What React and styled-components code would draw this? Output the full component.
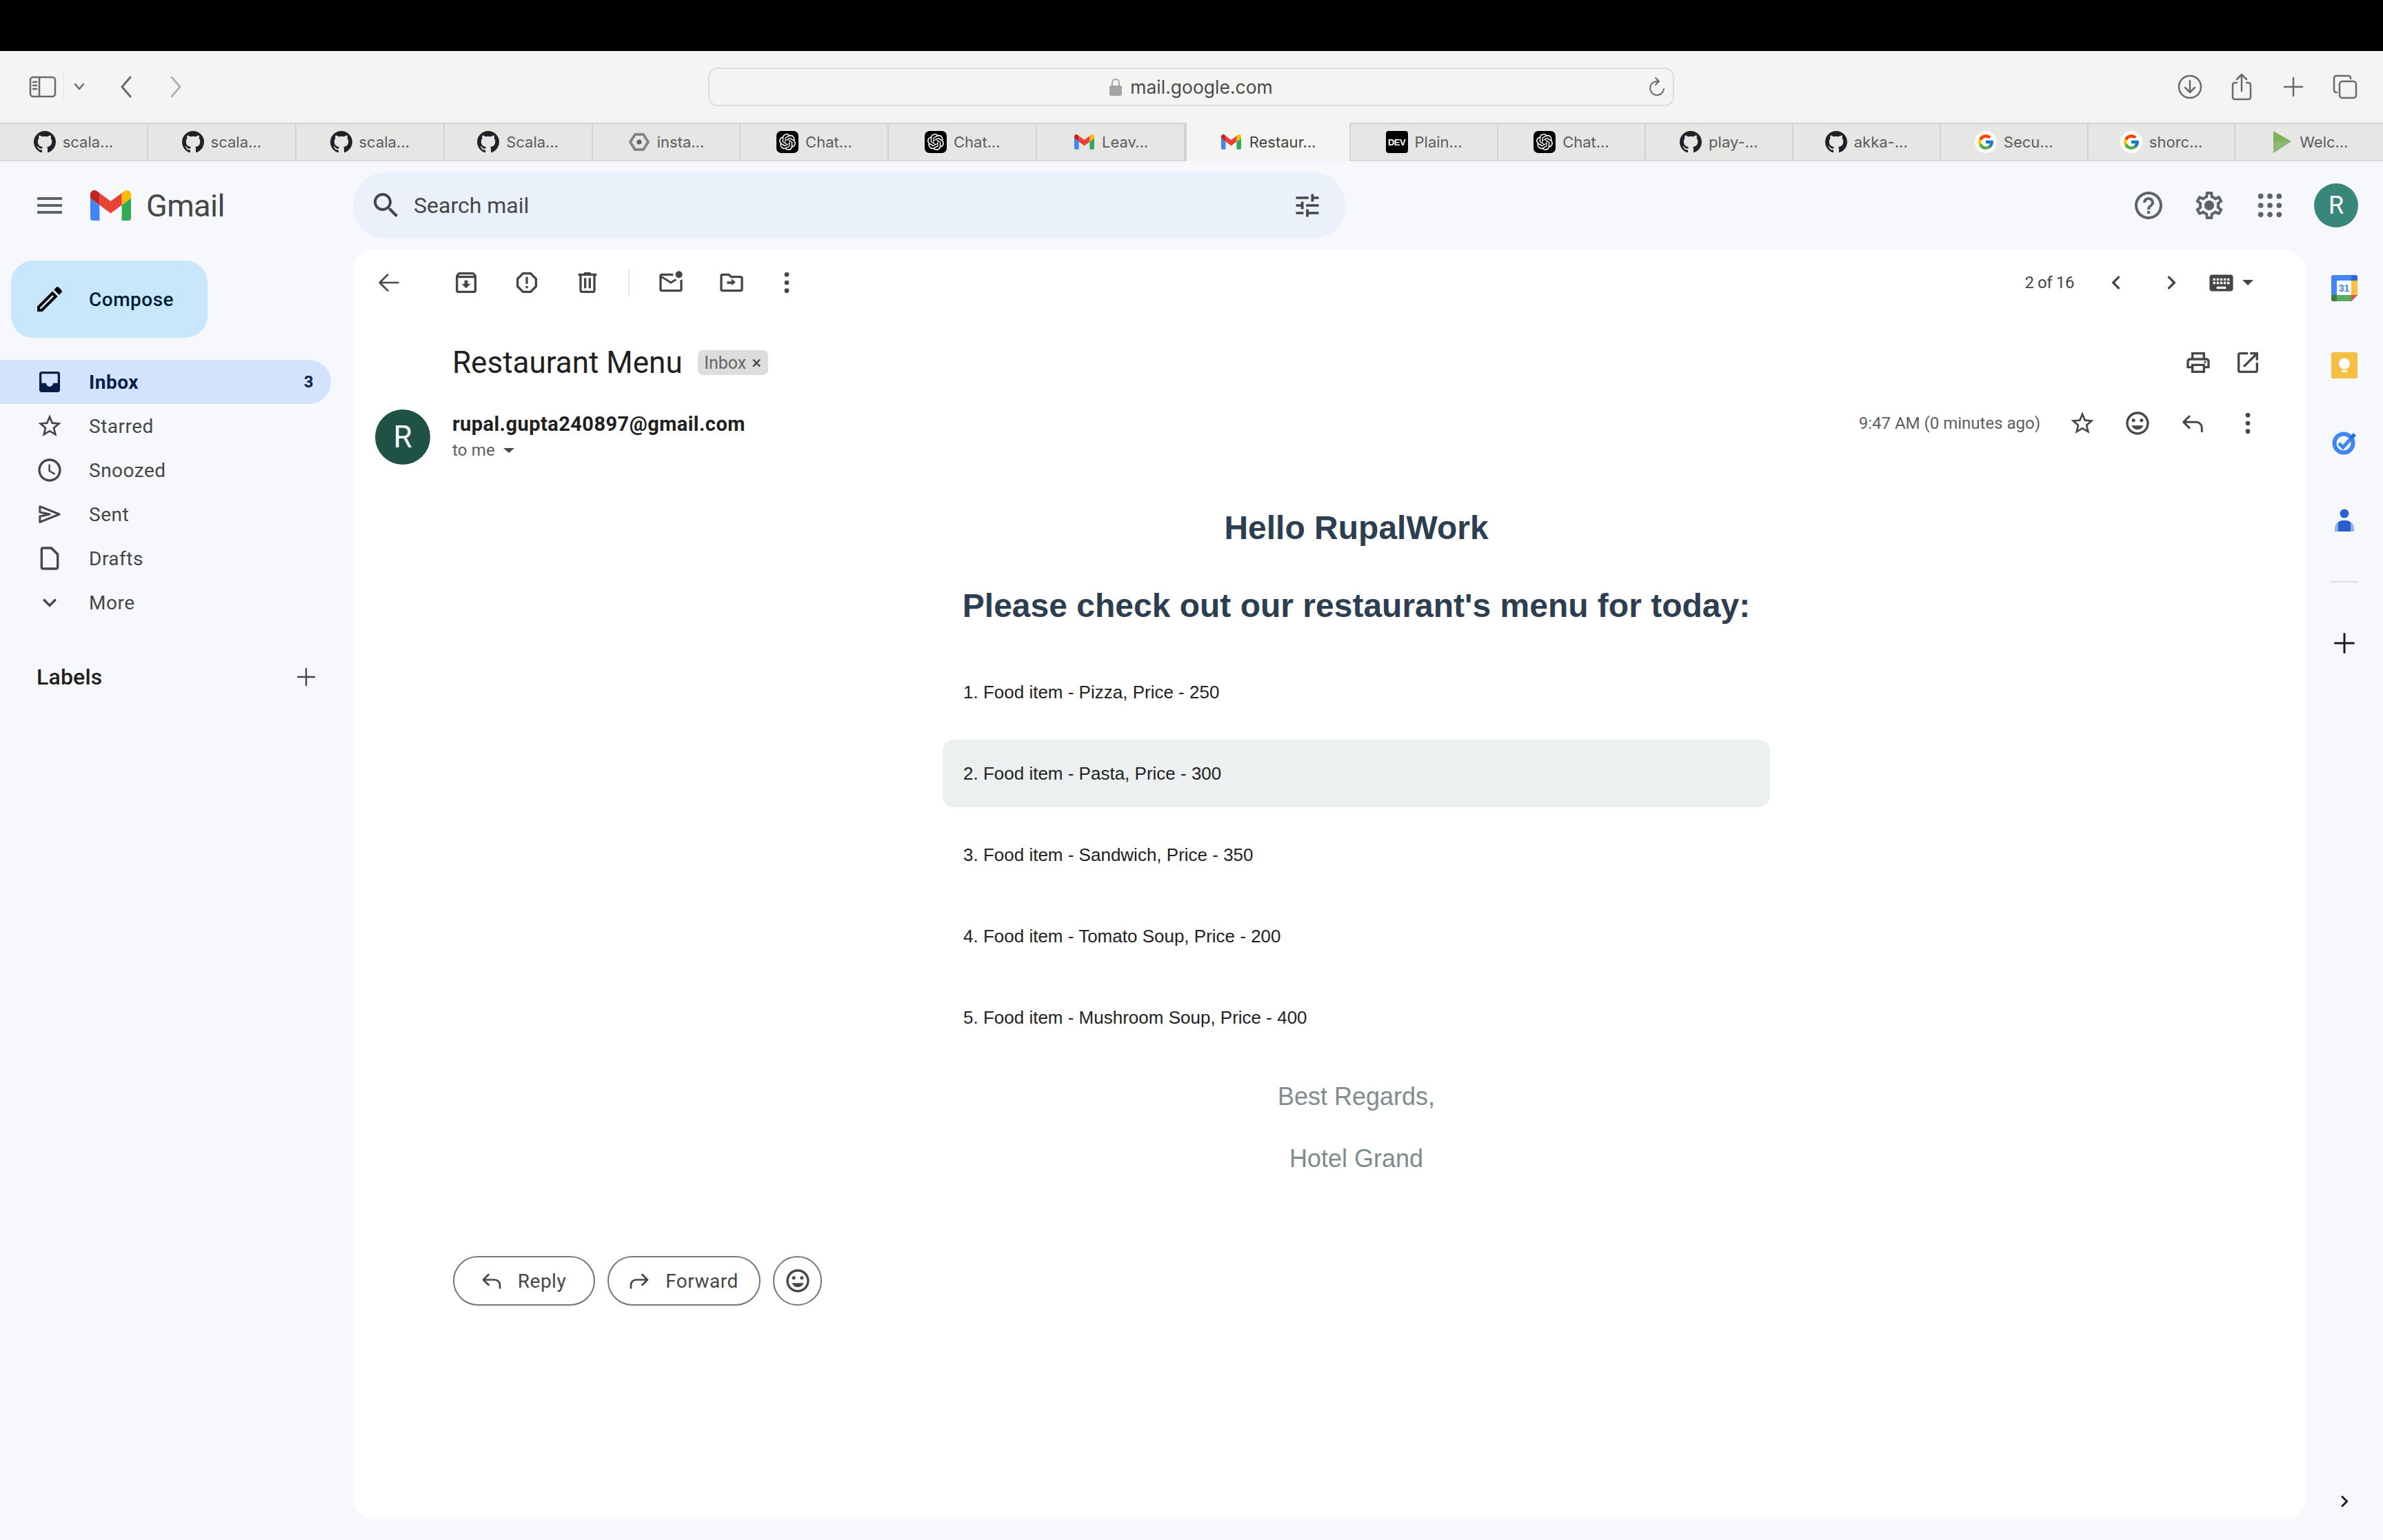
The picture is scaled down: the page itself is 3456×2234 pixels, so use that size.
import React from 'react';
import styled, { createGlobalStyle } from 'styled-components';
import { SiOpenai } from 'react-icons/si';
import { FcGoogle } from 'react-icons/fc';

const GlobalStyle = createGlobalStyle`
  html, body { margin: 0; padding: 0; background: #f6f8fc; }
  body { width: 3456px; height: 2234px; overflow: hidden; font-family: Roboto, "Liberation Sans", sans-serif; }
  * { box-sizing: border-box; }
`;

const SANS = 'Roboto, "Liberation Sans", sans-serif';
const UI = 'Inter, "Liberation Sans", sans-serif';
const ARIAL = '"Liberation Sans", Arial, sans-serif';

const Page = styled.div`width: 3456px; height: 2234px; display: flex; flex-direction: column;`;
const BlackBar = styled.div`height: 74px; background: #000;`;

/* browser chrome */
const BrowserBar = styled.div`
  height: 104px; background: #f4f4f2;
  display: grid; grid-template-columns: 1027px 1401px 1fr; align-items: center;
`;
const BrowserLeft = styled.div`display: flex; align-items: center; padding-left: 42px;`;
const ChromeSlot = styled.span`display: flex; margin-left: ${p => p.$left || 0}px;`;
const ChromeDivider = styled.span`width: 1px; height: 40px; background: #e0e0de; margin-left: 10px;`;
const AddressBar = styled.div`
  height: 56px; border: 2px solid #dcdcda; border-radius: 14px;
  display: grid; grid-template-columns: 1fr auto 1fr; align-items: center; padding-right: 10px;
`;
const AddressCenter = styled.div`
  grid-column: 2; display: flex; align-items: center; gap: 12px; margin-left: 10px;
  font: 400 26.5px ${UI}; color: #4a4a4a;
`;
const Reload = styled.span`grid-column: 3; justify-self: end; display: flex;`;
const BrowserRight = styled.div`display: flex; justify-content: flex-end; padding-right: 18px;`;
const ChromeCell = styled.span`width: 75px; display: flex; justify-content: center; align-items: center;`;

const TabStrip = styled.div`
  height: 56px; display: flex; background: #e6e6e4;
  border-top: 2px solid #d0d0ce; border-bottom: 2px solid #d8d8d6;
`;
const Tab = styled.div`
  flex: 0 0 ${p => p.$w}px;
  display: flex; align-items: center; justify-content: center; gap: 10px;
  background: ${p => (p.$active ? '#f4f4f2' : 'transparent')};
  border-right: 2px solid #d2d2d0;
  font: 400 22px ${UI}; color: ${p => (p.$active ? '#444' : '#5c5c5c')};
  ${p => p.$active && 'border-left: 2px solid #d2d2d0; margin-bottom: -2px; margin-top: -2px;'}
  &:last-child { border-right: 0; }
`;
const Favicon = styled.span`
  width: 32px; height: 32px; flex: none; display: flex; align-items: center; justify-content: center;
`;
const BlackFavicon = styled(Favicon)`background: #000; border-radius: 7px; color: #fff; font-size: 24px;`;
const DevFavicon = styled(Favicon)`
  background: #000; border-radius: 4px; color: #fff; font: 700 13px ${ARIAL}; letter-spacing: -0.5px;
`;
const GoogleFavicon = styled(Favicon)`background: #fff; border-radius: 50%; font-size: 26px;`;

/* gmail header */
const Header = styled.header`height: 128px; display: flex; align-items: center;`;
const Brand = styled.div`width: 512px; flex: none; display: flex; align-items: center; padding-left: 48px;`;
const LogoSlot = styled.span`display: flex; margin-left: 35px;`;
const BrandName = styled.span`
  margin-left: 22px; font: 400 45px ${SANS}; color: #444746; letter-spacing: -0.5px;
`;
const SearchBox = styled.div`
  width: 1440px; height: 96px; border-radius: 48px; background: #eaf1fb;
  display: flex; align-items: center; padding: 0 32px 0 24px;
`;
const SearchText = styled.span`margin-left: 16px; font: 400 32px ${SANS}; color: #444746;`;
const SearchFilter = styled.span`margin-left: auto; display: flex; width: 48px; justify-content: center;`;
const HeaderRight = styled.div`margin-left: auto; display: flex; align-items: center; padding-right: 36px;`;
const Avatar = styled.div`
  width: ${p => p.$size}px; height: ${p => p.$size}px; border-radius: 50%; flex: none;
  background: ${p => p.$bg}; color: #fff;
  display: flex; align-items: center; justify-content: center;
  font: 400 ${p => p.$font}px ${SANS};
  margin-left: ${p => p.$left || 0}px;
`;
const IconCell = styled.span`
  width: ${p => p.$w || 88}px; flex: none; display: flex; justify-content: center; align-items: center;
  margin-left: ${p => p.$left || 0}px;
`;

/* main region */
const Main = styled.div`height: 1842px; display: flex;`;
const Sidebar = styled.nav`width: 512px; flex: none; padding-top: 16px;`;
const Compose = styled.div`
  margin-left: 16px; width: 285px; height: 112px; border-radius: 32px; background: #c8e6fc;
  display: flex; align-items: center; padding-left: 32px;
  font: 500 28px ${SANS}; color: #001d35; letter-spacing: 0.5px;
`;
const ComposeLabel = styled.span`margin-left: 33px;`;
const NavList = styled.div`margin-top: 32px;`;
const NavRow = styled.div`
  width: 480px; height: 64px; border-radius: 0 32px 32px 0;
  display: flex; align-items: center; padding: 0 25px 0 52px;
  background: ${p => (p.$active ? '#d3e3fd' : 'transparent')};
  color: ${p => (p.$active ? '#041e49' : '#444746')};
  font: ${p => (p.$active ? 700 : 400)} 28px ${SANS}; letter-spacing: 0.5px;
`;
const NavLabel = styled.span`margin-left: 37px;`;
const NavCount = styled.span`margin-left: auto; font-size: 24px;`;
const LabelsRow = styled.div`
  margin-top: 44px; width: 480px; height: 64px; display: flex; align-items: center;
  padding: 0 18px 0 53px; font: 500 32px ${SANS}; color: #1f1f1f; letter-spacing: 0.2px;
`;
const LabelsAdd = styled.span`margin-left: auto; display: flex;`;

const Card = styled.main`
  width: 2832px; flex: none; background: #fff; border-radius: 32px; display: flex; flex-direction: column;
`;
const Toolbar = styled.div`height: 96px; display: flex; align-items: center; padding: 0 76px 0 8px;`;
const ToolDivider = styled.span`width: 2px; height: 40px; background: #e8eaed; margin: 0 16px 0 15px;`;
const Pager = styled.div`
  margin-left: auto; display: flex; align-items: center; font: 400 24px ${SANS}; color: #444746; letter-spacing: -0.4px;
`;
const CaretDown = styled.span`
  width: 0; height: 0; border-left: ${p => p.$w}px solid transparent; border-right: ${p => p.$w}px solid transparent;
  border-top: ${p => p.$h}px solid #444746; margin-left: ${p => p.$left}px;
`;
const SubjectRow = styled.div`height: 136px; display: flex; align-items: center; padding: 0 48px 0 144px;`;
const Subject = styled.h1`margin: 0; font: 400 44px ${SANS}; color: #1f1f1f;`;
const InboxChip = styled.span`
  margin-left: 22px; height: 36px; width: 102px; border-radius: 8px; background: #dddddd;
  display: flex; align-items: center; justify-content: center; gap: 8px;
  font: 400 25px ${SANS}; color: #666;
`;
const ChipClose = styled.span`color: #444; font-size: 26px; line-height: 1;`;
const SubjectTools = styled.div`margin-left: auto; display: flex;`;
const SenderRow = styled.div`height: 80px; display: flex; padding: 0 44px 0 32px;`;
const SenderInfo = styled.div`margin-left: 32px; display: flex; flex-direction: column;`;
const SenderName = styled.div`font: 700 29px/40px ${SANS}; color: #1f1f1f; margin-top: 1px; letter-spacing: 0.45px;`;
const ToLine = styled.div`display: flex; align-items: center; font: 400 24px/36px ${SANS}; color: #5e5e5e; letter-spacing: 0.2px;`;
const MessageTools = styled.div`margin-left: auto; height: 40px; display: flex; align-items: center;`;
const TimeText = styled.span`font: 400 24px ${SANS}; color: #5e5e5e; margin-right: 21px;`;

const EmailBody = styled.div`
  padding: 62px 66px 0 144px; display: flex; flex-direction: column; align-items: center; font-family: ${ARIAL};
`;
const Hello = styled.h2`margin: 0; font: 700 48px/60px ${ARIAL}; color: #2c3e50;`;
const Intro = styled.h3`margin: 51px 0 44px; font: 700 48px/64px ${ARIAL}; color: #2c3e50;`;
const MenuList = styled.div`width: 1200px; display: flex; flex-direction: column; gap: 20px;`;
const MenuItem = styled.div`
  height: 98px; padding-left: 30px; border-radius: 16px; display: flex; align-items: center;
  background: ${p => (p.$shaded ? '#ecf0f1' : 'transparent')};
  font: 400 26px ${ARIAL}; color: #222;
`;
const Regards = styled.p`
  margin: ${p => p.$top}px 0 0; font: 400 36px/50px ${ARIAL}; color: #7f8c8d;
`;
const ReplyRow = styled.div`margin-top: 116px; padding-left: 145px; display: flex; gap: 18px;`;
const PillButton = styled.button`
  width: ${p => p.$w}px; height: 72px; border: 2px solid #747775; border-radius: 36px; background: #fff;
  display: flex; align-items: center; justify-content: center; gap: ${p => p.$gap || 0}px;
  padding: 0 ${p => p.$pr || 0}px 0 0;
  font: 400 28px ${SANS}; color: #444746; letter-spacing: 0.5px;
`;

/* right rail */
const Rail = styled.aside`width: 112px; flex: none; display: flex; flex-direction: column; align-items: center;`;
const RailCell = styled.div`height: 112px; width: 100%; flex: none; display: flex; align-items: center; justify-content: center;`;
const RailDivider = styled.div`width: 40px; height: 2px; background: #dadce0; margin: 33px 0 32px;`;
const RailFoot = styled.div`margin-top: auto; height: 52px; display: flex; align-items: center;`;

const Svg = styled.svg`
  width: ${p => p.$size}px; height: ${p => p.$h || p.$size}px; flex: none; display: block;
  fill: ${p => p.$color || '#444746'};
`;
const Icon = ({ d, size = 40, color, children }) => (
  <Svg viewBox="0 0 24 24" $size={size} $color={color}>
    {d && <path d={d} />}
    {children}
  </Svg>
);
const Line = ({ d, size = 40, color = '#444746', w = 2 }) => (
  <Svg viewBox="0 0 24 24" $size={size} $color="none">
    <path d={d} stroke={color} strokeWidth={w} fill="none" strokeLinecap="round" strokeLinejoin="round" />
  </Svg>
);

const P = {
  menu: 'M3 18h18v-2H3v2zm0-5h18v-2H3v2zm0-7v2h18V6H3z',
  search: 'M15.5 14h-.79l-.28-.27C15.41 12.59 16 11.11 16 9.5 16 5.91 13.09 3 9.5 3S3 5.91 3 9.5 5.91 16 9.5 16c1.61 0 3.09-.59 4.23-1.57l.27.28v.79l5 4.99L20.49 19l-4.99-5zm-6 0C7.01 14 5 11.99 5 9.5S7.01 5 9.5 5 14 7.01 14 9.5 11.99 14 9.5 14z',
  tune: 'M3 17v2h6v-2H3zM3 5v2h10V5H3zm10 16v-2h8v-2h-8v-2h-2v6h2zM7 9v2H3v2h4v2h2V9H7zm14 4v-2H11v2h10zm-6-4h2V7h4V5h-4V3h-2v6z',
  help: 'M11 18h2v-2h-2v2zm1-16C6.48 2 2 6.48 2 12s4.48 10 10 10 10-4.48 10-10S17.52 2 12 2zm0 18c-4.41 0-8-3.59-8-8s3.59-8 8-8 8 3.59 8 8-3.59 8-8 8zm0-14c-2.21 0-4 1.79-4 4h2c0-1.1.9-2 2-2s2 .9 2 2c0 2-3 1.75-3 5h2c0-2.25 3-2.5 3-5 0-2.21-1.79-4-4-4z',
  gear: 'M19.43 12.98c.04-.32.07-.64.07-.98 0-.34-.03-.66-.07-.98l2.11-1.65c.19-.15.24-.42.12-.64l-2-3.46c-.09-.16-.26-.25-.44-.25-.06 0-.12.01-.17.03l-2.49 1c-.52-.4-1.08-.73-1.69-.98l-.38-2.65C14.46 2.18 14.25 2 14 2h-4c-.25 0-.46.18-.49.42l-.38 2.65c-.61.25-1.17.59-1.69.98l-2.49-1c-.06-.02-.12-.03-.18-.03-.17 0-.34.09-.43.25l-2 3.46c-.13.22-.07.49.12.64l2.11 1.65c-.04.32-.07.65-.07.98 0 .33.03.66.07.98l-2.11 1.65c-.19.15-.24.42-.12.64l2 3.46c.09.16.26.25.44.25.06 0 .12-.01.17-.03l2.49-1c.52.4 1.08.73 1.69.98l.38 2.65c.03.24.24.42.49.42h4c.25 0 .46-.18.49-.42l.38-2.65c.61-.25 1.17-.59 1.69-.98l2.49 1c.06.02.12.03.18.03.17 0 .34-.09.43-.25l2-3.46c.12-.22.07-.49-.12-.64l-2.11-1.65zm-1.98-1.71c.04.31.05.52.05.73 0 .21-.02.43-.05.73l-.14 1.13.89.7 1.08.84-.7 1.21-1.27-.51-1.04-.42-.9.68c-.43.32-.84.56-1.25.73l-1.06.43-.16 1.13-.2 1.35h-1.4l-.19-1.35-.16-1.13-1.06-.43c-.43-.18-.83-.41-1.23-.71l-.91-.7-1.06.43-1.27.51-.7-1.21 1.08-.84.89-.7-.14-1.13c-.03-.31-.05-.54-.05-.74s.02-.43.05-.73l.14-1.13-.89-.7-1.08-.84.7-1.21 1.27.51 1.04.42.9-.68c.43-.32.84-.56 1.25-.73l1.06-.43.16-1.13.2-1.35h1.39l.19 1.35.16 1.13 1.06.43c.43.18.83.41 1.23.71l.91.7 1.06-.43 1.27-.51.7 1.21-1.07.85-.89.7.14 1.13z',
  edit: 'M3 17.25V21h3.75L17.81 9.94l-3.75-3.75L3 17.25zM5.92 19H5v-.92l9.06-9.06.92.92L5.92 19zM20.71 5.63l-2.34-2.34c-.2-.2-.45-.29-.71-.29s-.51.1-.7.29l-1.83 1.83 3.75 3.75 1.83-1.83c.39-.39.39-1.02 0-1.41z',
  inbox: 'M19 3H5c-1.1 0-2 .9-2 2v14c0 1.1.9 2 2 2h14c1.1 0 2-.9 2-2V5c0-1.1-.9-2-2-2zm0 10h-4c0 1.66-1.35 3-3 3s-3-1.34-3-3H5V5h14v8z',
  star: 'M22 9.24l-7.19-.62L12 2 9.19 8.63 2 9.24l5.46 4.73L5.82 21 12 17.27 18.18 21l-1.63-7.03L22 9.24zM12 15.4l-3.76 2.27 1-4.28-3.32-2.88 4.38-.38L12 6.1l1.71 4.04 4.38.38-3.32 2.88 1 4.28L12 15.4z',
  clock: 'M11.99 2C6.47 2 2 6.48 2 12s4.47 10 9.99 10C17.52 22 22 17.52 22 12S17.52 2 11.99 2zM12 20c-4.42 0-8-3.58-8-8s3.58-8 8-8 8 3.58 8 8-3.58 8-8 8zm.5-13H11v6l5.25 3.15.75-1.23-4.5-2.67z',
  draft: 'M14 2H6c-1.1 0-2 .9-2 2v16c0 1.1.9 2 2 2h12c1.1 0 2-.9 2-2V8l-6-6zm4 18H6V4h7l5 5v11z',
  expand: 'M16.59 8.59L12 13.17 7.41 8.59 6 10l6 6 6-6z',
  archive: 'M20.54 5.23l-1.39-1.68C18.88 3.21 18.47 3 18 3H6c-.47 0-.88.21-1.16.55L3.46 5.23C3.17 5.57 3 6.02 3 6.5V19c0 1.1.9 2 2 2h14c1.1 0 2-.9 2-2V6.5c0-.48-.17-.93-.46-1.27zM6.24 5h11.52l.83 1H5.42l.82-1zM5 19V8h14v11H5zm8.45-9h-2.9v3H8l4 4 4-4h-2.55z',
  report: 'M15.73 3H8.27L3 8.27v7.46L8.27 21h7.46L21 15.73V8.27L15.73 3zM19 14.9L14.9 19H9.1L5 14.9V9.1L9.1 5h5.8L19 9.1v5.8zM11 7h2v6h-2zM11 15h2v2h-2z',
  trash: 'M15 4V3H9v1H4v2h1v13c0 1.1.9 2 2 2h10c1.1 0 2-.9 2-2V6h1V4h-5zm2 15H7V6h10v13zM9 8h2v9H9zm4 0h2v9h-2z',
  unread: 'M22 8.98V18c0 1.1-.9 2-2 2H4c-1.1 0-2-.9-2-2V6c0-1.1.9-2 2-2h10.1c-.06.32-.1.66-.1 1 0 .34.04.68.1 1H4l8 5 3.67-2.29c.47.43 1.02.76 1.63.98L12 13 4 8v10h16V9.9c.74-.15 1.42-.48 2-.92zM16 5c0 1.66 1.34 3 3 3s3-1.34 3-3-1.34-3-3-3-3 1.34-3 3z',
  move: 'M20 6h-8l-2-2H4c-1.11 0-2 .89-2 2v12c0 1.1.89 2 2 2h16c1.1 0 2-.9 2-2V8c0-1.11-.89-2-2-2zm0 12H4V6h5.17l2 2H20v10zm-8-3.5V13H8v-2h4V8.5l3.5 3z',
  left: 'M15.41 7.41L14 6l-6 6 6 6 1.41-1.41L10.83 12z',
  right: 'M10 6L8.59 7.41 13.17 12l-4.58 4.59L10 18l6-6z',
  keyboard: 'M20 5H4c-1.1 0-1.99.9-1.99 2L2 17c0 1.1.9 2 2 2h16c1.1 0 2-.9 2-2V7c0-1.1-.9-2-2-2zm-9 3h2v2h-2V8zm0 3h2v2h-2v-2zM8 8h2v2H8V8zm0 3h2v2H8v-2zm-1 2H5v-2h2v2zm0-3H5V8h2v2zm9 7H8v-2h8v2zm0-4h-2v-2h2v2zm0-3h-2V8h2v2zm3 3h-2v-2h2v2zm0-3h-2V8h2v2z',
  print: 'M19 8h-1V3H6v5H5c-1.66 0-3 1.34-3 3v6h4v4h12v-4h4v-6c0-1.66-1.34-3-3-3zM8 5h8v3H8V5zm8 12v2H8v-4h8v2zm2-2v-2H6v2H4v-4c0-.55.45-1 1-1h14c.55 0 1 .45 1 1v4h-2z',
  open: 'M19 19H5V5h7V3H5c-1.11 0-2 .9-2 2v14c0 1.1.89 2 2 2h14c1.1 0 2-.9 2-2v-7h-2v7zM14 3v2h3.59l-9.83 9.83 1.41 1.41L19 6.41V10h2V3h-7z',
  smile: 'M12 2C6.47 2 2 6.47 2 12s4.47 10 10 10 10-4.47 10-10S17.53 2 12 2zm0 18c-4.41 0-8-3.59-8-8s3.59-8 8-8 8 3.59 8 8-3.59 8-8 8zM12 17.5c2.33 0 4.3-1.46 5.11-3.5H6.89c.8 2.04 2.78 3.5 5.11 3.5z',
  github: 'M8 0C3.58 0 0 3.58 0 8c0 3.54 2.29 6.53 5.47 7.59.4.07.55-.17.55-.38 0-.19-.01-.82-.01-1.49-2.01.37-2.53-.49-2.69-.94-.09-.23-.48-.94-.82-1.13-.28-.15-.68-.52-.01-.53.63-.01 1.08.58 1.23.82.72 1.21 1.87.87 2.33.66.07-.52.28-.87.51-1.07-1.78-.2-3.64-.89-3.64-3.95 0-.87.31-1.59.82-2.15-.08-.2-.36-1.02.08-2.12 0 0 .67-.21 2.2.82.64-.18 1.32-.27 2-.27.68 0 1.36.09 2 .27 1.53-1.04 2.2-.82 2.2-.82.44 1.1.16 1.92.08 2.12.51.56.82 1.27.82 2.15 0 3.07-1.87 3.75-3.65 3.95.29.25.54.73.54 1.48 0 1.07-.01 1.93-.01 2.2 0 .21.15.46.55.38A8.013 8.013 0 0016 8c0-4.42-3.58-8-8-8z',
};

const SendLine = 'M3.5 5.2L20.5 12 3.5 18.8V13.8L12 12 3.5 10.2z';
const ReplyLine = 'M9 6 L4 11 L9 16 M4 11 H15 a5 5 0 0 1 5 5 V19';
const ForwardLine = 'M15 6 L20 11 L15 16 M20 11 H9 a5 5 0 0 0 -5 5 V19';

const MoreVert = ({ size = 40 }) => (
  <Icon size={size}>
    <circle cx="12" cy="5" r="2" />
    <circle cx="12" cy="12" r="2" />
    <circle cx="12" cy="19" r="2" />
  </Icon>
);
const Smile = ({ size = 40 }) => (
  <Icon size={size} d={P.smile}>
    <circle cx="8.5" cy="9.5" r="1.5" />
    <circle cx="15.5" cy="9.5" r="1.5" />
  </Icon>
);
const AppsDots = () => (
  <Icon size={40} color="#5f6368">
    {[4, 12, 20].flatMap(y => [4, 12, 20].map(x => <circle key={`${x}-${y}`} cx={x} cy={y} r="2.3" />))}
  </Icon>
);
const GmailM = ({ size = 59 }) => (
  <Svg viewBox="52 42 88 66" $size={size} $h={size * 0.75}>
    <path fill="#4285f4" d="M58 108h14V74L52 59v43c0 3.32 2.69 6 6 6" />
    <path fill="#34a853" d="M120 108h14c3.32 0 6-2.69 6-6V59l-20 15" />
    <path fill="#fbbc04" d="M120 48v26l20-15v-8c0-7.42-8.47-11.65-14.4-7.2" />
    <path fill="#ea4335" d="M72 74V48l24 18 24-18v26L96 92" />
    <path fill="#c5221f" d="M52 51v8l20 15V48l-5.6-4.2c-5.94-4.45-14.4-.22-14.4 7.2" />
  </Svg>
);
const GithubIcon = () => (
  <Svg viewBox="0 0 16 16" $size={32} $color="#1f2328"><path d={P.github} /></Svg>
);
const CloudIcon = () => (
  <Svg viewBox="0 0 32 32" $size={32} $color="none">
    <path d="M10 5h12l7 11-7 11H10L3 16z" stroke="#80868b" strokeWidth="4" strokeLinejoin="round" />
    <circle cx="16" cy="16" r="3.6" fill="#5f6368" />
  </Svg>
);
const PlayIcon = () => (
  <Svg viewBox="0 0 32 32" $size={32}>
    <path d="M4 0 L30 15 L4 32z" fill="#7cb45c" />
    <path d="M4 16 L30 15 L4 32z" fill="#8fb87e" />
  </Svg>
);
const GptFavicon = () => <BlackFavicon><SiOpenai /></BlackFavicon>;

const TABS = [
  { icon: <GithubIcon />, label: 'scala…' },
  { icon: <GithubIcon />, label: 'scala…' },
  { icon: <GithubIcon />, label: 'scala…' },
  { icon: <GithubIcon />, label: 'Scala…' },
  { icon: <CloudIcon />, label: 'insta…' },
  { icon: <GptFavicon />, label: 'Chat…' },
  { icon: <GptFavicon />, label: 'Chat…' },
  { icon: <Favicon><GmailM size={29} /></Favicon>, label: 'Leav…' },
  { icon: <Favicon><GmailM size={29} /></Favicon>, label: 'Restaur…', active: true },
  { icon: <DevFavicon>DEV</DevFavicon>, label: 'Plain…' },
  { icon: <GptFavicon />, label: 'Chat…' },
  { icon: <GithubIcon />, label: 'play-…' },
  { icon: <GithubIcon />, label: 'akka-…' },
  { icon: <GoogleFavicon><FcGoogle /></GoogleFavicon>, label: 'Secu…' },
  { icon: <GoogleFavicon><FcGoogle /></GoogleFavicon>, label: 'shorc…' },
  { icon: <PlayIcon />, label: 'Welc…' },
];

const SendIcon = ({ color }) => <Line d={SendLine} size={40} w={1.8} color={color} />;

const NAV = [
  { label: 'Inbox', d: P.inbox, active: true, count: 3 },
  { label: 'Starred', d: P.star },
  { label: 'Snoozed', d: P.clock },
  { label: 'Sent', line: true },
  { label: 'Drafts', d: P.draft },
  { label: 'More', d: P.expand },
];

const MENU = [
  '1. Food item - Pizza, Price - 250',
  '2. Food item - Pasta, Price - 300',
  '3. Food item - Sandwich, Price - 350',
  '4. Food item - Tomato Soup, Price - 200',
  '5. Food item - Mushroom Soup, Price - 400',
];

const CalendarIcon = () => (
  <Svg viewBox="0 0 38 38" $size={38}>
    <path d="M3 0h32a3 3 0 0 1 3 3v26l-9 9H3a3 3 0 0 1-3-3V3a3 3 0 0 1 3-3z" fill="#4285f4" />
    <rect x="29" y="8" width="9" height="21" fill="#f4bf42" />
    <path d="M8 29h21v9H8z" fill="#5bab61" />
    <path d="M0 29h8v9H3a3 3 0 0 1-3-3z" fill="#3c7d44" />
    <path d="M29 38v-9h9z" fill="#dd5144" />
    <path d="M29 0h6a3 3 0 0 1 3 3v5h-9z" fill="#3367d6" />
    <rect x="8" y="8" width="21" height="21" fill="#fff" />
    <text x="18.5" y="24" textAnchor="middle" fontFamily={ARIAL} fontSize="14" fontWeight="700" fill="#4285f4">31</text>
  </Svg>
);
const KeepIcon = () => (
  <Svg viewBox="0 0 38 38" $size={38}>
    <rect width="38" height="38" rx="3" fill="#f4bf42" />
    <circle cx="19" cy="16.5" r="8" fill="#fff" />
    <rect x="15" y="21" width="8" height="3" fill="#fff" />
    <rect x="15" y="26" width="8" height="3" fill="#fff" />
  </Svg>
);
const TasksIcon = () => (
  <Svg viewBox="0 0 36 36" $size={36}>
    <circle cx="17" cy="19" r="13.5" fill="none" stroke="#4285f4" strokeWidth="6" />
    <path d="M10 19l6 6L33 6" fill="none" stroke="#4285f4" strokeWidth="5" />
    <path d="M27 12l6-6" stroke="#2a6ae0" strokeWidth="5" />
  </Svg>
);
const ContactsIcon = () => (
  <Svg viewBox="0 0 28 33" $size={28} $h={33}>
    <circle cx="14" cy="7" r="6.5" fill="#2a5fcc" />
    <path d="M0 33v-4c0-8 6-12 14-12s14 4 14 12v4z" fill="#8ab0f5" />
    <path d="M5 33V21c0-3 4-4 9-4s9 1 9 4v12z" fill="#2a5fcc" />
  </Svg>
);

const BrowserStroke = ({ w = 40, h = 40, vb = '0 0 40 40', children, color = '#6a6a6a', sw = 2.5 }) => (
  <Svg viewBox={vb} $size={w} $h={h} $color="none" stroke={color} strokeWidth={sw} strokeLinecap="round" strokeLinejoin="round">
    {children}
  </Svg>
);

const tabWidth = (i, active) => {
  if (active) return 240;
  return i < 8 ? 214.9 : 213.9;
};

export default function App() {
  return (
    <Page>
      <GlobalStyle />
      <BlackBar />
      <BrowserBar>
        <BrowserLeft>
          <ChromeSlot>
            <BrowserStroke w={40} h={32} vb="0 0 40 32">
              <rect x="2" y="2" width="36" height="28" rx="4" />
              <path d="M15 2v28" />
              <path d="M6 9h5M6 14h5M6 19h5" />
            </BrowserStroke>
          </ChromeSlot>
          <ChromeDivider />
          <ChromeSlot $left={14}>
            <BrowserStroke w={16} h={12} vb="0 0 16 12"><path d="M2 2l6 7 6-7" /></BrowserStroke>
          </ChromeSlot>
          <ChromeSlot $left={50}>
            <BrowserStroke w={20} h={34} vb="0 0 20 34" sw={3}><path d="M16 3L4 17l12 14" /></BrowserStroke>
          </ChromeSlot>
          <ChromeSlot $left={52}>
            <BrowserStroke w={20} h={34} vb="0 0 20 34" sw={3} color="#b4b4b4"><path d="M4 3l12 14L4 31" /></BrowserStroke>
          </ChromeSlot>
        </BrowserLeft>
        <AddressBar>
          <AddressCenter>
            <Svg viewBox="0 0 18 26" $size={18} $h={26} $color="#a3a3a3">
              <rect x="0" y="11" width="18" height="15" rx="3" />
              <path d="M4 12V7a5 5 0 0 1 10 0v5" fill="none" stroke="#a3a3a3" strokeWidth="2" />
            </Svg>
            <span>mail.google.com</span>
          </AddressCenter>
          <Reload>
            <BrowserStroke w={26} h={30} vb="0 0 26 30" sw={2}>
              <path d="M15 7h-2a10 10 0 1 0 10 11" />
              <path d="M11 2l5 5-5 5" />
            </BrowserStroke>
          </Reload>
        </AddressBar>
        <BrowserRight>
          <ChromeCell>
            <BrowserStroke w={36} h={36} vb="0 0 36 36">
              <circle cx="18" cy="18" r="16" />
              <path d="M18 9v17M11 19l7 7 7-7" />
            </BrowserStroke>
          </ChromeCell>
          <ChromeCell>
            <BrowserStroke w={30} h={40} vb="0 0 30 40">
              <path d="M8 14H5a3 3 0 0 0-3 3v18a3 3 0 0 0 3 3h20a3 3 0 0 0 3-3V17a3 3 0 0 0-3-3h-3" />
              <path d="M15 26V3M8 9l7-7 7 7" />
            </BrowserStroke>
          </ChromeCell>
          <ChromeCell>
            <BrowserStroke w={30} h={30} vb="0 0 30 30"><path d="M15 2v26M2 15h26" /></BrowserStroke>
          </ChromeCell>
          <ChromeCell>
            <BrowserStroke w={36} h={36} vb="0 0 36 36">
              <rect x="10" y="10" width="24" height="24" rx="4" />
              <path d="M6 26H5a3 3 0 0 1-3-3V5a3 3 0 0 1 3-3h18a3 3 0 0 1 3 3v1" />
            </BrowserStroke>
          </ChromeCell>
        </BrowserRight>
      </BrowserBar>

      <TabStrip>
        {TABS.map((t, i) => (
          <Tab key={i} $active={t.active} $w={tabWidth(i, t.active)}>
            {t.icon}
            <span>{t.label}</span>
          </Tab>
        ))}
      </TabStrip>

      <Header>
        <Brand>
          <Icon d={P.menu} size={48} color="#5f6368" />
          <LogoSlot><GmailM /></LogoSlot>
          <BrandName>Gmail</BrandName>
        </Brand>
        <SearchBox>
          <Icon d={P.search} size={48} />
          <SearchText>Search mail</SearchText>
          <SearchFilter><Icon d={P.tune} size={44} /></SearchFilter>
        </SearchBox>
        <HeaderRight>
          <IconCell><Icon d={P.help} size={48} color="#5f6368" /></IconCell>
          <IconCell>
            <Icon d={P.gear} size={48} color="#5f6368"><circle cx="12" cy="12" r="3.6" /></Icon>
          </IconCell>
          <IconCell><AppsDots /></IconCell>
          <Avatar $size={64} $bg="#38877a" $font={36} $left={20}>R</Avatar>
        </HeaderRight>
      </Header>

      <Main>
        <Sidebar>
          <Compose>
            <Icon d={P.edit} size={48} color="#000" />
            <ComposeLabel>Compose</ComposeLabel>
          </Compose>
          <NavList>
            {NAV.map(n => (
              <NavRow key={n.label} $active={n.active}>
                {n.line
                  ? <SendIcon color="#444746" />
                  : <Icon d={n.d} size={40} color={n.active ? '#041e49' : '#444746'} />}
                <NavLabel>{n.label}</NavLabel>
                {n.count && <NavCount>{n.count}</NavCount>}
              </NavRow>
            ))}
          </NavList>
          <LabelsRow>
            Labels
            <LabelsAdd><Line d="M12 4v16M4 12h16" size={36} w={1.6} /></LabelsAdd>
          </LabelsRow>
        </Sidebar>

        <Card>
          <Toolbar>
            <IconCell><Line d="M20 12H5M11 5l-7 7 7 7" size={40} w={1.6} /></IconCell>
            <IconCell $left={24}><Icon d={P.archive} /></IconCell>
            <IconCell><Icon d={P.report} /></IconCell>
            <IconCell><Icon d={P.trash} /></IconCell>
            <ToolDivider />
            <IconCell><Icon d={P.unread} /></IconCell>
            <IconCell><Icon d={P.move} /></IconCell>
            <IconCell $w={72}><MoreVert /></IconCell>
            <Pager>
              <span>2 of 16</span>
              <IconCell $w={80} $left={21}><Icon d={P.left} size={40} /></IconCell>
              <IconCell $w={80}><Icon d={P.right} size={40} /></IconCell>
              <IconCell $w={41} $left={12}><Icon d={P.keyboard} size={41} /></IconCell>
              <CaretDown $w={8} $h={8} $left={10} />
            </Pager>
          </Toolbar>
          <SubjectRow>
            <Subject>Restaurant Menu</Subject>
            <InboxChip>Inbox<ChipClose>×</ChipClose></InboxChip>
            <SubjectTools>
              <IconCell $w={72}><Icon d={P.print} size={40}><circle cx="18" cy="11.5" r="1" /></Icon></IconCell>
              <IconCell $w={72}><Icon d={P.open} size={40} /></IconCell>
            </SubjectTools>
          </SubjectRow>
          <SenderRow>
            <Avatar $size={80} $bg="#1f5244" $font={44}>R</Avatar>
            <SenderInfo>
              <SenderName>rupal.gupta240897@gmail.com</SenderName>
              <ToLine>to me<CaretDown $w={8} $h={7} $left={12} /></ToLine>
            </SenderInfo>
            <MessageTools>
              <TimeText>9:47 AM (0 minutes ago)</TimeText>
              <IconCell $w={80}><Icon d={P.star} /></IconCell>
              <IconCell $w={80}><Smile /></IconCell>
              <IconCell $w={80}><Line d={ReplyLine} size={40} w={1.8} /></IconCell>
              <IconCell $w={80}><MoreVert /></IconCell>
            </MessageTools>
          </SenderRow>

          <EmailBody>
            <Hello>Hello RupalWork</Hello>
            <Intro>Please check out our restaurant's menu for today:</Intro>
            <MenuList>
              {MENU.map((m, i) => <MenuItem key={m} $shaded={i === 1}>{m}</MenuItem>)}
            </MenuList>
            <Regards $top={41}>Best Regards,</Regards>
            <Regards $top={40}>Hotel Grand</Regards>
          </EmailBody>

          <ReplyRow>
            <PillButton $w={206} $gap={20} $pr={4}><Line d={ReplyLine} size={36} w={1.8} />Reply</PillButton>
            <PillButton $w={222} $gap={20} $pr={4}><Line d={ForwardLine} size={36} w={1.8} />Forward</PillButton>
            <PillButton $w={71}><Smile size={40} /></PillButton>
          </ReplyRow>
        </Card>

        <Rail>
          <RailCell><CalendarIcon /></RailCell>
          <RailCell><KeepIcon /></RailCell>
          <RailCell><TasksIcon /></RailCell>
          <RailCell><ContactsIcon /></RailCell>
          <RailDivider />
          <RailCell><Line d="M12 3v18M3 12h18" size={36} w={2} color="#1a1a1a" /></RailCell>
          <RailFoot><Icon d={P.right} size={34} color="#1a1a1a" /></RailFoot>
        </Rail>
      </Main>
    </Page>
  );
}
